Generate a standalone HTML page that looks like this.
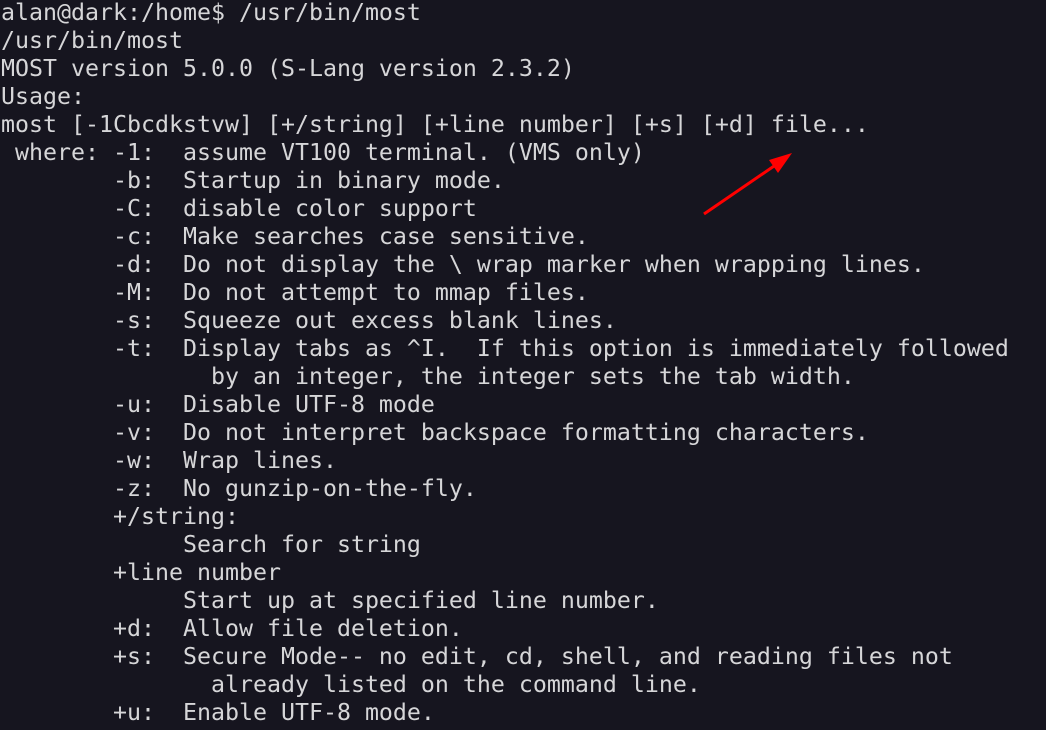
<!DOCTYPE html>
<html><head><meta charset="utf-8"><style>
html,body{margin:0;padding:0;background:#16151f;width:1046px;height:730px;overflow:hidden}
pre{margin:0;position:absolute;left:1px;top:-1px;font-family:"DejaVu Sans Mono","Liberation Mono",monospace;font-size:23.25px;line-height:28px;color:#d6d6d8;white-space:pre}
svg{position:absolute;left:0;top:0}
</style></head><body>
<pre>alan@dark:/home$ /usr/bin/most
/usr/bin/most
MOST version 5.0.0 (S-Lang version 2.3.2)
Usage:
most [-1Cbcdkstvw] [+/string] [+line number] [+s] [+d] file...
 where: -1:  assume VT100 terminal. (VMS only)
        -b:  Startup in binary mode.
        -C:  disable color support
        -c:  Make searches case sensitive.
        -d:  Do not display the \ wrap marker when wrapping lines.
        -M:  Do not attempt to mmap files.
        -s:  Squeeze out excess blank lines.
        -t:  Display tabs as ^I.  If this option is immediately followed
               by an integer, the integer sets the tab width.
        -u:  Disable UTF-8 mode
        -v:  Do not interpret backspace formatting characters.
        -w:  Wrap lines.
        -z:  No gunzip-on-the-fly.
        +/string:
             Search for string
        +line number
             Start up at specified line number.
        +d:  Allow file deletion.
        +s:  Secure Mode-- no edit, cd, shell, and reading files not
               already listed on the command line.
        +u:  Enable UTF-8 mode.</pre>
<svg width="1046" height="730"><line x1="704" y1="214" x2="777" y2="164" stroke="#ff0000" stroke-width="3"/><polygon points="792,153 769,160 778,173" fill="#ff0000"/></svg>
</body></html>
